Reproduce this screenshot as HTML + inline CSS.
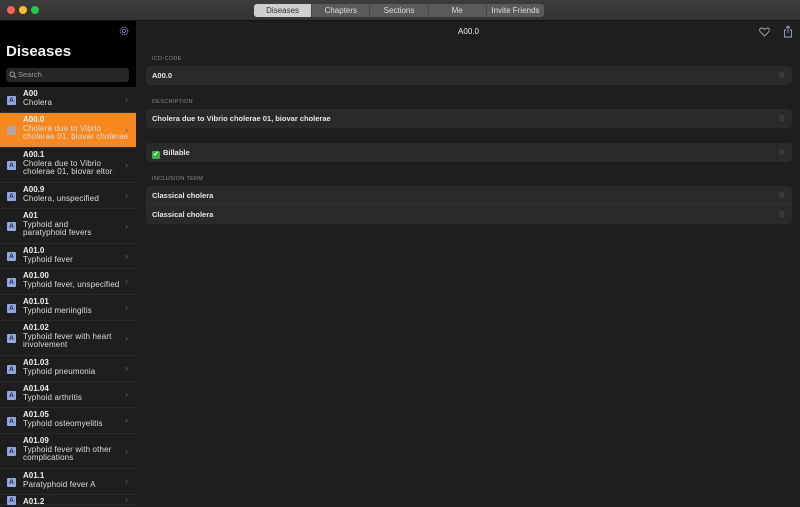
<!DOCTYPE html>
<html><head><style>
*{margin:0;padding:0;box-sizing:border-box}
body{width:800px;height:500px;overflow:hidden;background:#1e1e1e;font-family:"Liberation Sans",sans-serif;color:#e6e6e6;position:relative}
.tb{position:absolute;left:0;top:0;width:800px;height:21px;background:linear-gradient(#3d3d3d,#333);border-bottom:1px solid #111}
.dot{position:absolute;top:6px;width:8px;height:8px;border-radius:50%}
.seg{position:absolute;left:254px;top:4px;height:13px;width:290px;display:flex;background:#5a5a5a;border-radius:3px;overflow:hidden}
.seg div{flex:1;font-size:8px;color:#ddd;text-align:center;line-height:13px;border-right:1px solid #474747}
.seg div.on{background:#cfcfcf;color:#333}
.sb{position:absolute;left:0;top:21px;width:136px;height:479px;background:#000;border-right:1px solid #000}
.row{position:absolute;left:0;width:136px;background:#1e1e1e;border-bottom:1px solid #2a2a2a}
.row .ic{position:absolute;left:7px;width:9px;height:9px;background:#8fa8e0;border-radius:1px;font-size:6.5px;color:#224;text-align:center;line-height:9px;font-weight:bold}
.row .t{position:absolute;left:23px;top:2px;font-size:8px;line-height:9.5px;font-weight:bold;color:#eee}
.row .s{position:absolute;left:23px;top:11.5px;font-size:8px;line-height:8.7px;color:#ddd;white-space:nowrap;letter-spacing:.15px}
.row .c{position:absolute;right:8px;font-size:9px;color:#666}
.row.sel{background:#f7881f}
.row.sel .ic{background:#b7a4a0;color:#b7a4a0}
.lbl{position:absolute;left:152px;font-size:5.5px;color:#8a8a8a;letter-spacing:.3px}
.card{position:absolute;left:146px;width:646px;background:#2a2a2a;border-radius:4px;font-size:7.5px;font-weight:bold;color:#e6e6e6}
.card div{height:19px;line-height:19px;padding-left:6px;position:relative}
.card div:after{content:"";position:absolute;right:8px;top:6px;width:5px;height:6px;background:#3a3a3a;border-radius:1px}
</style></head><body>
<div class="tb">
<div class="dot" style="left:7px;background:#fe5f57"></div>
<div class="dot" style="left:19px;background:#febc2e"></div>
<div class="dot" style="left:31px;background:#28c840"></div>
<div class="seg"><div class="on">Diseases</div><div>Chapters</div><div>Sections</div><div>Me</div><div style="border:0">Invite Friends</div></div>
</div>
<div class="sb">
<svg style="position:absolute;left:119px;top:5px" width="10" height="10" viewBox="0 0 10 10"><circle cx="5" cy="5" r="3.8" fill="none" stroke="#7f8fb8" stroke-width="1" stroke-dasharray="1.5 .8"/><circle cx="5" cy="5" r="1.6" fill="none" stroke="#7f8fb8" stroke-width=".8"/></svg>
<div style="position:absolute;left:6px;top:22px;font-size:15px;font-weight:bold;color:#f0f0f0">Diseases</div>
<div style="position:absolute;left:6px;top:47px;width:123px;height:14px;background:#262626;border-radius:3px;font-size:7.5px;color:#999;line-height:14px;padding-left:12px">Search
<svg style="position:absolute;left:3px;top:3px" width="8" height="8" viewBox="0 0 8 8"><circle cx="3.2" cy="3.2" r="2.3" fill="none" stroke="#aaa" stroke-width=".9"/><path d="M5 5L7.2 7.2" stroke="#aaa" stroke-width=".9"/></svg></div>
</div>
<div id="list"></div>
<div style="position:absolute;left:137px;top:21px;width:663px;text-align:center;font-size:8px;line-height:22px;color:#eee">A00.0</div>
<svg style="position:absolute;left:759px;top:27px" width="11" height="10" viewBox="0 0 11 10"><path d="M5.5 9L1.3 4.8C0 3.4.6 1 2.8 1c1.2 0 2 .8 2.7 1.6C6.2 1.8 7 1 8.2 1c2.2 0 2.8 2.4 1.5 3.8Z" fill="none" stroke="#aaa" stroke-width=".9"/></svg>
<svg style="position:absolute;left:783px;top:25px" width="10" height="13" viewBox="0 0 10 13"><path d="M3 5H1.5v7h7V5H7M5 1v7M3 3l2-2 2 2" fill="none" stroke="#9aa8cc" stroke-width=".9"/></svg>
<div class="lbl" style="top:56px">ICD-CODE</div>
<div class="card" style="top:66px"><div>A00.0</div></div>
<div class="lbl" style="top:99px">DESCRIPTION</div>
<div class="card" style="top:109px"><div>Cholera due to Vibrio cholerae 01, biovar cholerae</div></div>
<div class="card" style="top:143px"><div><span style="display:inline-block;width:8px;height:8px;background:#3bb54a;border-radius:1.5px;color:#fff;font-size:7px;line-height:8px;text-align:center;vertical-align:-1px;margin-right:3px">✓</span>Billable</div></div>
<div class="lbl" style="top:176px">INCLUSION TERM</div>
<div class="card" style="top:186px"><div style="border-bottom:1px solid #333">Classical cholera</div><div>Classical cholera</div></div>
<script>
var rows=[["A00","Cholera",87,26],["A00.0","Cholera due to Vibrio<br>cholerae 01, biovar cholerae",113,35,1],["A00.1","Cholera due to Vibrio<br>cholerae 01, biovar eltor",148,35],["A00.9","Cholera, unspecified",183,26],["A01","Typhoid and<br>paratyphoid fevers",209,35],["A01.0","Typhoid fever",244,25],["A01.00","Typhoid fever, unspecified",269,26],["A01.01","Typhoid meningitis",295,26],["A01.02","Typhoid fever with heart<br>involvement",321,35],["A01.03","Typhoid pneumonia",356,26],["A01.04","Typhoid arthritis",382,26],["A01.05","Typhoid osteomyelitis",408,26],["A01.09","Typhoid fever with other<br>complications",434,35],["A01.1","Paratyphoid fever A",469,26],["A01.2","",495,10]];
var h="";rows.forEach(function(r){h+='<div class="row'+(r[4]?' sel':'')+'" style="top:'+r[2]+'px;height:'+r[3]+'px"><div class="ic" style="top:'+(r[3]/2-4.5)+'px">A</div><div class="t">'+r[0]+'</div><div class="s">'+r[1]+'</div><div class="c" style="top:'+(r[3]/2-6)+'px">›</div></div>'});
document.getElementById("list").innerHTML=h;
</script>
</body></html>
